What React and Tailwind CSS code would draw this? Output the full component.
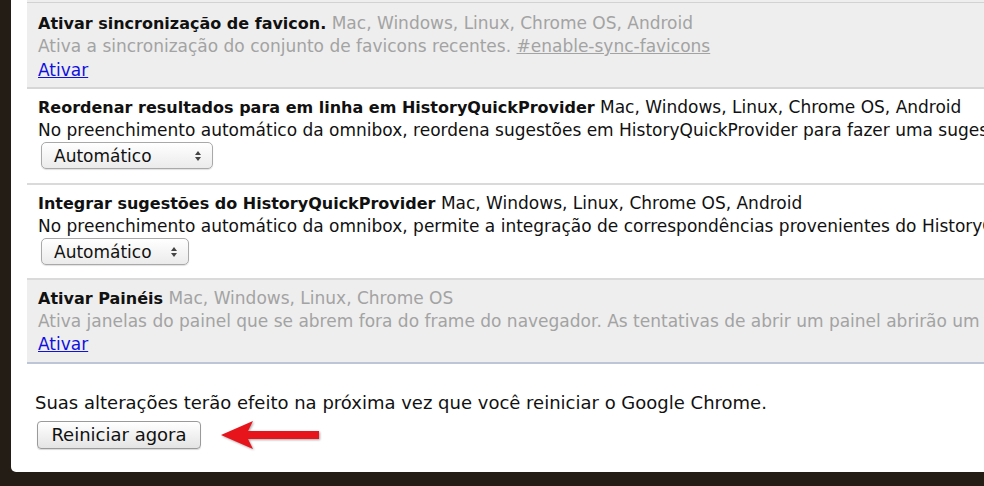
import React from 'react';

const font = { fontFamily: '"DejaVu Sans", "Liberation Sans", sans-serif' };

const Platforms = ({ muted }) => (
	<span className={muted ? 'text-[17px] leading-none font-normal text-[#a3a3a3]' : 'text-[17px] leading-none font-normal'}>
		{' '}Mac, Windows, Linux, Chrome OS, Android
	</span>
);

const SelectBox = ({ width }) => (
	<div
		className={`mt-px flex h-[27px] items-center justify-between rounded-[5px] border border-[#a9a9a9] bg-gradient-to-b from-white to-[#ebebeb] pl-[12px] pr-[10px] shadow-[0_1px_1px_rgba(0,0,0,0.12)] ${width}`}
	>
		<span>Automático</span>
		<svg width="8" height="12" viewBox="0 0 8 12">
			<path d="M4 1 L7 5 L1 5 Z" fill="#444" />
			<path d="M4 11 L7 7 L1 7 Z" fill="#444" />
		</svg>
	</div>
);

const Arrow = () => (
	<svg width="104" height="34" viewBox="0 0 104 34" className="ml-[18px] drop-shadow-[1px_1px_1px_rgba(0,0,0,0.35)]">
		<path d="M2 17 L34 3 L29 13 L100 13 L100 21 L29 21 L34 31 Z" fill="#e8141b" />
	</svg>
);

export default function App() {
	return (
		<div className="flex h-[486px] w-[984px] overflow-hidden bg-[#231d15]" style={font}>
			<div className="ml-[11px] flex h-[472px] flex-1 flex-col overflow-hidden rounded-bl-[5px] bg-white text-[17px] leading-[22px] text-[#111]">
				<div className="ml-[16px] flex flex-col whitespace-nowrap">
					<div className="h-[3px] border-b border-[#d2d2d2] bg-[#eeeeee]" />

					<div className="border-b-2 border-[#d6d6d6] bg-[#eeeeee] pb-[6px] pl-[11px] pt-[10px]">
						<div className="h-[22px] text-[16px] font-bold">
							Ativar sincronização de favicon.
							<Platforms muted />
						</div>
						<div className="text-[#a3a3a3]">
							Ativa a sincronização do conjunto de favicons recentes.{' '}
							<span className="underline">#enable-sync-favicons</span>
						</div>
						<a className="mt-[2px] block text-[#1010e0] underline">Ativar</a>
					</div>

					<div className="border-b-2 border-[#dadada] pb-[14px] pl-[11px] pt-[8px]">
						<div className="h-[22px] text-[16px] font-bold">
							Reordenar resultados para em linha em HistoryQuickProvider
							<Platforms />
						</div>
						<div>
							No preenchimento automático da omnibox, reordena sugestões em HistoryQuickProvider para fazer uma sugestão em linha
						</div>
						<div className="pl-[3px]">
							<SelectBox width="w-[172px]" />
						</div>
					</div>

					<div className="border-b-2 border-[#dadada] pb-[13px] pl-[11px] pt-[8px]">
						<div className="h-[22px] text-[16px] font-bold">
							Integrar sugestões do HistoryQuickProvider
							<Platforms />
						</div>
						<div>
							No preenchimento automático da omnibox, permite a integração de correspondências provenientes do HistoryQuickProvider
						</div>
						<div className="pl-[3px]">
							<SelectBox width="w-[148px]" />
						</div>
					</div>

					<div className="border-b-2 border-[#bcc6d6] bg-[#eeeeee] pb-[7px] pl-[11px] pt-[8px]">
						<div className="h-[22px] text-[16px] font-bold">
							Ativar Painéis
							<span className="text-[17px] leading-none font-normal text-[#a3a3a3]"> Mac, Windows, Linux, Chrome OS</span>
						</div>
						<div className="text-[#a3a3a3]">
							Ativa janelas do painel que se abrem fora do frame do navegador. As tentativas de abrir um painel abrirão um pop-up
						</div>
						<a className="mt-px block text-[#1010e0] underline">Ativar</a>
					</div>
				</div>

				<div className="flex flex-col pl-[24px] pt-[28px] whitespace-nowrap">
					<div className="text-[18px]">Suas alterações terão efeito na próxima vez que você reiniciar o Google Chrome.</div>
					<div className="mt-[4px] flex items-center">
						<button className="ml-[2px] h-[28px] w-[164px] rounded-[4px] border border-[#9a9a9a] bg-gradient-to-b from-white to-[#e4e4e4] text-[18px] text-[#111] shadow-[0_1px_1px_rgba(0,0,0,0.15)]">
							Reiniciar agora
						</button>
						<Arrow />
					</div>
				</div>
			</div>
		</div>
	);
}
